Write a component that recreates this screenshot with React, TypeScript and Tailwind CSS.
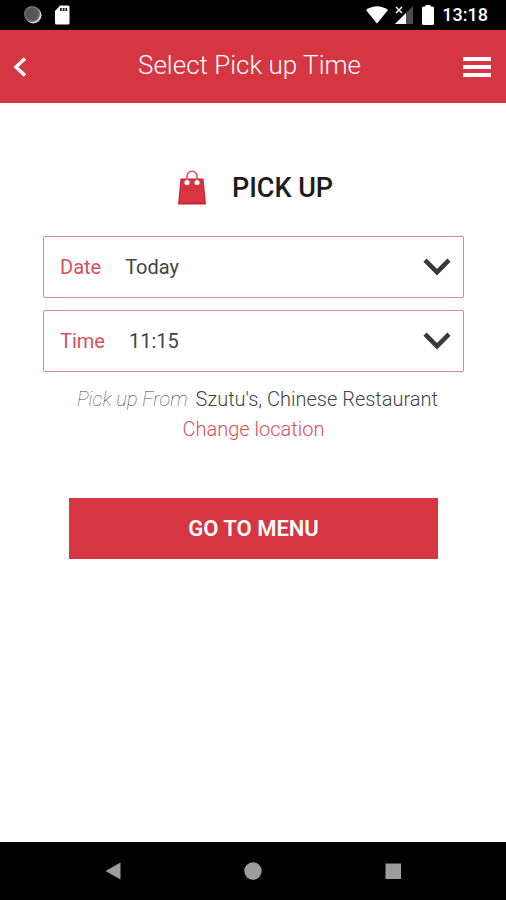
import React, { useState } from 'react';

interface PickerFieldProps {
  id: string;
  label: string;
  value: string;
  options: string[];
  onChange: (value: string) => void;
}

const StatusBar: React.FC = () => (
  <div className="flex h-[30px] shrink-0 items-center justify-between bg-black pr-[18px] pl-6 text-white">
    <div className="flex items-center gap-3">
      <svg className="h-[18px] w-[18px]" viewBox="0 0 18 18" aria-hidden="true">
        <circle cx="9.3" cy="9.3" r="8.2" fill="#d8d8d8" />
        <circle cx="8" cy="8" r="8" fill="#6e6e6e" />
        <circle cx="8" cy="8" r="6.3" fill="#565656" />
      </svg>
      <svg className="h-5 w-4" viewBox="0 0 16 20" aria-hidden="true">
        <path d="M6 .5h8a1.5 1.5 0 0 1 1.5 1.5v16a1.5 1.5 0 0 1-1.5 1.5H2.5A1.5 1.5 0 0 1 1 18V6z" fill="#fff" />
        <path d="M6 3h1.800v3H6zM8.700 3h1.800v3H8.700zM11.400 3h1.800v3h-1.800z" fill="#222" />
      </svg>
    </div>
    <div className="flex items-center">
      <svg className="mr-[7px] h-[18px] w-[22px]" viewBox="0 0 22 18" aria-hidden="true">
        <path d="M0 4Q11-3.500 22 4L11 17.500z" fill="#fff" />
      </svg>
      <svg className="mr-[9px] h-[18px] w-[18px]" viewBox="0 0 18 18" aria-hidden="true">
        <path d="M18 0v18H0z" fill="#4d4d4d" />
        <path d="M11 7v11H0z" fill="#fff" />
        <path d="M1 1l6 6M7 1L1 7" stroke="#fff" strokeWidth="1.5" />
      </svg>
      <svg className="mr-2 h-5 w-3" viewBox="0 0 12 20" aria-hidden="true">
        <path d="M3.500 0h5v1.500h2A1.500 1.500 0 0 1 12 3v15.500a1.500 1.500 0 0 1-1.500 1.500h-9A1.500 1.500 0 0 1 0 18.500V3a1.500 1.500 0 0 1 1.500-1.500h2z" fill="#fff" />
      </svg>
      <span className="text-[18px] leading-5 font-medium">13:18</span>
    </div>
  </div>
);

const PickerField: React.FC<PickerFieldProps> = ({ id, label, value, options, onChange }) => (
  <div className="relative flex h-[62px] items-center rounded-xs border border-[#e0858b] pl-4 text-[20px]">
    <label htmlFor={id} className="text-[#d9505b]">
      {label}
    </label>
    <select
      id={id}
      value={value}
      onChange={(e) => onChange(e.target.value)}
      className="h-full min-w-0 flex-1 appearance-none bg-transparent pl-6 text-[#444] outline-none"
    >
      {options.map((option) => (
        <option key={option}>{option}</option>
      ))}
    </select>
    <svg
      className="pointer-events-none absolute right-3 h-[18px] w-7"
      viewBox="0 0 28 18"
      fill="none"
      aria-hidden="true"
    >
      <path d="M2 2.200L14 14.200L26 2.200" stroke="#3a3a3a" strokeWidth="4.500" />
    </svg>
  </div>
);

const App: React.FC = () => {
  const [date, setDate] = useState('Today');
  const [time, setTime] = useState('11:15');

  return (
    <div className="flex min-h-screen flex-col bg-white font-['Roboto',sans-serif]">
      <StatusBar />

      <header className="flex h-[73px] shrink-0 items-center justify-between bg-[#d63542] pr-[15px] pl-3 text-white">
        <button type="button" aria-label="Back" className="flex w-7">
          <svg className="h-5 w-[15px]" viewBox="0 0 15 20" fill="none">
            <path d="M13 1.500L4 10L13 18.500" stroke="#fff" strokeWidth="3.500" />
          </svg>
        </button>
        <h1 className="pr-1 pb-1 text-[26px] leading-8 font-light">Select Pick up Time</h1>
        <button type="button" aria-label="Menu" className="flex w-7 flex-col gap-1">
          <span className="h-1 w-full bg-white" />
          <span className="h-1 w-full bg-white" />
          <span className="h-1 w-full bg-white" />
        </button>
      </header>

      <main className="flex flex-1 flex-col pt-[67px] pr-[42px] pl-[43px]">
        <div className="flex items-center justify-center gap-[26px] pl-1">
          <svg className="h-9 w-7" viewBox="0 0 28 36" aria-hidden="true">
            <path d="M2.500 8.500h23L28 34.500H0z" fill="#d02231" />
            <path d="M3.500 10h21L26.500 32.500H1.500z" fill="#d63542" />
            <path d="M9 12V6.500a5 5.300 0 0 1 10 0V12" fill="none" stroke="#dc5963" strokeWidth="1.600" />
            <circle cx="9" cy="12.500" r="2.600" fill="#fff" />
            <circle cx="19" cy="12.500" r="2.600" fill="#fff" />
          </svg>
          <h2 className="text-[27px] leading-9 font-medium text-[#1c1c1c]">PICK UP</h2>
        </div>

        <div className="mt-[30px] flex flex-col gap-3">
          <PickerField
            id="pickup-date"
            label="Date"
            value={date}
            options={['Today', 'Tomorrow']}
            onChange={setDate}
          />
          <PickerField
            id="pickup-time"
            label="Time"
            value={time}
            options={['11:15', '11:30', '11:45', '12:00']}
            onChange={setTime}
          />
        </div>

        <div className="mt-3 flex flex-col items-center text-[20px] leading-[30px] font-light">
          <p className="pl-2 text-[#444]">
            <em className="mr-2 font-thin">Pick up From</em>
            Szutu's, Chinese Restaurant
          </p>
          <a href="#location" className="text-[#d9505b]">
            Change location
          </a>
        </div>

        <button
          type="button"
          className="mx-[26px] mt-[54px] h-[61px] bg-[#d63542] text-[22px] font-semibold text-white"
        >
          GO TO MENU
        </button>
      </main>

      <nav className="flex h-[58px] shrink-0 items-center justify-center gap-[116px] bg-black">
        <button type="button" aria-label="Back">
          <svg className="h-6 w-6" viewBox="0 0 24 24">
            <path d="M4.500 12L19.500 3.500v17z" fill="#9c9c9c" />
          </svg>
        </button>
        <button type="button" aria-label="Home">
          <svg className="h-6 w-6" viewBox="0 0 24 24">
            <circle cx="12" cy="12" r="8.700" fill="#9c9c9c" />
          </svg>
        </button>
        <button type="button" aria-label="Recent apps">
          <svg className="h-6 w-6" viewBox="0 0 24 24">
            <path d="M4.500 4.500h15.500v15.500H4.500z" fill="#9c9c9c" />
          </svg>
        </button>
      </nav>
    </div>
  );
};

export default App;
